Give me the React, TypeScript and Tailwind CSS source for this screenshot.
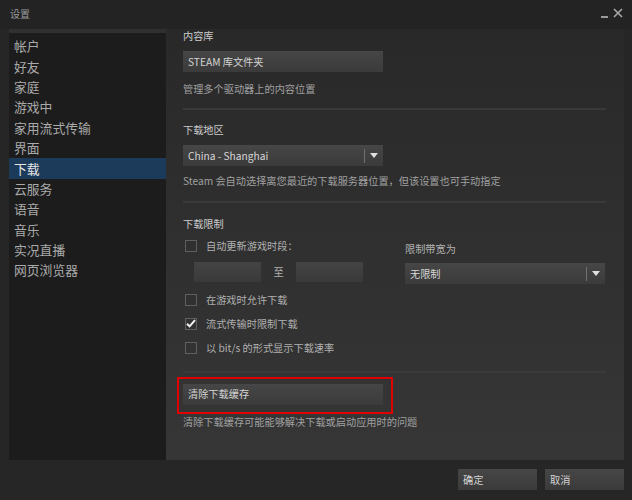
import React from "react";

const FONT = { fontFamily: '"Noto Sans CJK SC", "Noto Sans", sans-serif' };

const navItems = [
  "帐户",
  "好友",
  "家庭",
  "游戏中",
  "家用流式传输",
  "界面",
  "下载",
  "云服务",
  "语音",
  "音乐",
  "实况直播",
  "网页浏览器",
];

function Arrow() {
  return (
    <div className="flex items-center h-full">
      <div className="w-px h-[14px] bg-[#707070]" />
      <svg width="8" height="5" viewBox="0 0 8 5" className="ml-[5px] mr-[5px]">
        <path d="M0 0 H8 L4 5 Z" fill="#e0e0e0" />
      </svg>
    </div>
  );
}

function Dropdown({ text }: { text: string }) {
  return (
    <div className="w-[200px] h-[21px] flex items-center justify-between bg-linear-to-b from-[#464646] to-[#3b3b3b] pl-[5px]">
      <span className="text-[10.2px] leading-[14px] text-[#d6d6d6]">{text}</span>
      <Arrow />
    </div>
  );
}

function Btn({ text, w = "w-[200px]" }: { text: string; w?: string }) {
  return (
    <div className={`${w} h-[21px] flex items-center bg-linear-to-b from-[#464646] to-[#3b3b3b] pl-[5px]`}>
      <span className="text-[10.2px] leading-[14px] text-[#d4d4d4]">{text}</span>
    </div>
  );
}

function Check({ checked, label }: { checked?: boolean; label: string }) {
  return (
    <div className="flex items-center h-[14px]">
      <div className="ml-[2px] w-[12px] h-[12px] border border-[#5f5f5f] flex items-center justify-center">
        {checked && (
          <svg width="10" height="9" viewBox="0 0 10 9">
            <path d="M1 4.8 L3.6 7.4 L9 1.2" stroke="#f2f2f2" strokeWidth="2" fill="none" />
          </svg>
        )}
      </div>
      <span className="ml-[9px] text-[10.2px] leading-[14px] text-[#b0b0b0]">{label}</span>
    </div>
  );
}

function Sep() {
  return <div className="w-[423px] h-[2px] bg-[#3a3a3a]" />;
}

export default function App() {
  return (
    <div className="w-[632px] h-[500px] bg-[#262626] flex flex-col" style={FONT}>
      {/* title bar */}
      <div className="h-[29px] flex items-start justify-between bg-[#232323]">
        <span className="ml-[10px] mt-[6px] text-[10px] leading-[16px] text-[#9a9a9a]">设置</span>
        <div className="flex items-start mt-[8px] mr-[9px]">
          <div className="w-[7px] h-[2px] bg-[#9a9a9a] mt-[8px]" />
          <svg width="10" height="10" viewBox="0 0 10 10" className="ml-[5px]">
            <path d="M1 1 L9 9 M9 1 L1 9" stroke="#a8a8a8" strokeWidth="1.6" />
          </svg>
        </div>
      </div>

      {/* main area */}
      <div className="flex mx-[8px] h-[431px]">
        {/* sidebar */}
        <div className="w-[157px] ml-[1px] bg-[#1c1c1c] flex flex-col">
          <div className="h-[4px] bg-[#303030]" />
          <div className="pt-[3px] flex flex-col">
            {navItems.map((t) => (
              <div
                key={t}
                className={`h-[20.4px] flex items-center pl-[5px] text-[12.8px] leading-[16px] ${
                  t === "下载" ? "bg-[#1c3a5a] text-[#e6e6e6]" : "text-[#aaaaaa]"
                }`}
              >
                {t}
              </div>
            ))}
          </div>
        </div>

        {/* content */}
        <div className="flex-1 bg-linear-to-b from-[#292929] to-[#363636] pl-[17px] flex flex-col">
          {/* section 1 */}
          <div className="text-[10.2px] leading-[14px] text-[#cdcdcd]">内容库</div>
          <div className="mt-[8px]">
            <Btn text="STEAM 库文件夹" />
          </div>
          <div className="mt-[10px] text-[10.2px] leading-[14px] text-[#a0a0a0]">管理多个驱动器上的内容位置</div>
          <div className="mt-[12px]">
            <Sep />
          </div>

          {/* section 2 */}
          <div className="mt-[13px] text-[10.2px] leading-[14px] text-[#cdcdcd]">下载地区</div>
          <div className="mt-[8px]">
            <Dropdown text="China - Shanghai" />
          </div>
          <div className="mt-[8px] text-[10.2px] leading-[14px] text-[#a0a0a0]">
            Steam 会自动选择离您最近的下载服务器位置，但该设置也可手动指定
          </div>
          <div className="mt-[13px]">
            <Sep />
          </div>

          {/* section 3 */}
          <div className="mt-[14px] text-[10.2px] leading-[14px] text-[#cdcdcd]">下载限制</div>
          <div className="mt-[8px] flex items-start">
            <div className="w-[222px] flex flex-col">
              <Check label="自动更新游戏时段：" />
              <div className="mt-[9px] flex items-center">
                <div className="ml-[11px] w-[67px] h-[20px] bg-linear-to-b from-[#444444] to-[#3a3a3a]" />
                <div className="w-[35px] text-center text-[10.2px] leading-[14px] text-[#b0b0b0]">至</div>
                <div className="w-[67px] h-[20px] bg-linear-to-b from-[#444444] to-[#3a3a3a]" />
              </div>
            </div>
            <div className="flex flex-col">
              <div className="mt-[3px] text-[10.2px] leading-[14px] text-[#b0b0b0]">限制带宽为</div>
              <div className="mt-[7px]">
                <Dropdown text="无限制" />
              </div>
            </div>
          </div>
          <div className="mt-[3.5px] flex flex-col">
            <div className="h-[24px] flex items-center">
              <Check label="在游戏时允许下载" />
            </div>
            <div className="h-[24px] flex items-center">
              <Check checked label="流式传输时限制下载" />
            </div>
            <div className="h-[24px] flex items-center">
              <Check label="以 bit/s 的形式显示下载速率" />
            </div>
          </div>
          <div className="mt-[11px]">
            <Sep />
          </div>

          {/* section 4 */}
          <div className="mt-[4px] -ml-[6px] w-[216px] h-[37px] border-2 border-[#e10000] pt-[5px] pl-[4px]">
            <Btn text="清除下载缓存" />
          </div>
          <div className="mt-px text-[10.2px] leading-[14px] text-[#a0a0a0]">
            清除下载缓存可能能够解决下载或启动应用时的问题
          </div>
        </div>
      </div>

      {/* bottom buttons */}
      <div className="flex justify-end mt-[9px] mr-[8px] gap-[8px]">
        <Btn text="确定" w="w-[79px]" />
        <Btn text="取消" w="w-[79px]" />
      </div>
    </div>
  );
}
